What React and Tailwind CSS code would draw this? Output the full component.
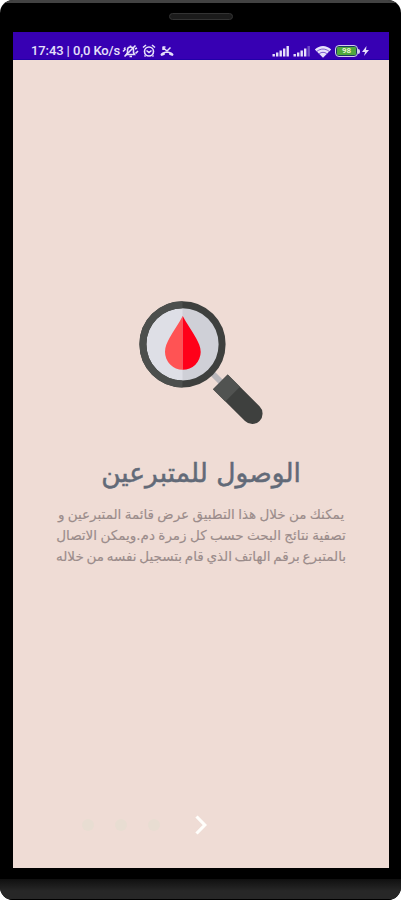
const LINES = [
  { text: 'يمكنك من خلال هذا التطبيق عرض قائمة المتبرعين و', spacing: '[word-spacing:-1px]' },
  { text: 'تصفية نتائج البحث حسب كل زمرة دم.ويمكن الاتصال', spacing: '[word-spacing:-0.9px]' },
  { text: 'بالمتبرع برقم الهاتف الذي قام بتسجيل نفسه من خلاله', spacing: '[word-spacing:-1.6px]' },
]

function MuteIcon() {
  return (
    <svg viewBox="0 0 17 14" className="w-[17px] h-[14px]" fill="none" stroke="currentColor" strokeWidth="1.6">
      <path d="M4.5 10.5h8l-1-2V6a3 3 0 0 0-6 0v2.500zM7.500 12.500h2.500M8.500 3V1.500" />
      <path d="M2.500 12.500 13.500 1.500M1 7.500l2.500-2.500M13.500 9.500l2.500-2.500M2 5l1.500-1.500M13 5l2-1" />
    </svg>
  )
}

function AlarmIcon() {
  return (
    <svg viewBox="0 0 14 14" className="w-[14px] h-[14px]" fill="none" stroke="currentColor" strokeWidth="1.6">
      <circle cx="7" cy="7.500" r="4.500" />
      <path d="M1 3.500 4 1M13 3.500 10 1M4.500 6.500l2.500 2 2.500-2M3.500 11.500l-1 1M10.500 11.500l1 1" />
    </svg>
  )
}

function MissedCallIcon() {
  return (
    <svg viewBox="0 0 14 12" className="w-[14px] h-[12px]" fill="currentColor">
      <path d="M.8 10.300C.3 9.700.5 8.900 1.100 8.400c3.200-2.600 8.600-2.600 11.800 0 .6.500.8 1.300.3 1.900l-.8.7-3.200-1.200V8.200c-1.500-.4-2.900-.4-4.400 0v1.600l-3.200 1.200z" />
      <path d="M3 2v3M2.500 2h3M3 2.500 7 6l3.500-3.500" fill="none" stroke="currentColor" strokeWidth="1.500" />
    </svg>
  )
}

function SignalIcon({ weak }) {
  return (
    <svg viewBox="0 0 18 12" className="w-[18px] h-[12px]" fill="currentColor">
      <rect x="0.500" y="9" width="2.400" height="2.500" />
      <rect x="4" y="7.500" width="2.400" height="4" />
      <rect x="7.500" y="5.500" width="2.400" height="6" />
      <rect x="11" y="3.500" width="2.400" height="8" />
      <rect x="14.500" y="1" width="2.400" height="10.500" opacity={weak ? 0.35 : 1} />
    </svg>
  )
}

function WifiIcon() {
  return (
    <svg viewBox="0 0 18 13" className="w-[18px] h-[13px]">
      <path d="M.8 4.500C5.500-.2 12.500-.2 17.200 4.500L9 12.700z" fill="currentColor" />
      <path d="M3 6.300c3.700-3 8.300-3 12 0M5.200 8.600c2.400-1.700 5.200-1.700 7.600 0" fill="none" stroke="#3700b3" strokeWidth=".6" />
    </svg>
  )
}

function StatusBar() {
  return (
    <div dir="ltr" className="flex h-[28px] shrink-0 items-end justify-between border-b border-[#2200a8] bg-[#3700b3] pl-[18px] pr-[20px] pb-px text-[#e6e0fa]">
      <div className="flex h-[14px] items-center">
        <span className="w-[91px] whitespace-nowrap font-[Roboto] text-[13px] font-medium leading-[14px] tracking-[-0.100px]">17:43 | 0,0 Ko/s</span>
        <MuteIcon />
        <span className="w-[3px]" />
        <AlarmIcon />
        <span className="w-[4px]" />
        <MissedCallIcon />
      </div>
      <div className="flex h-[14px] items-center">
        <SignalIcon />
        <span className="w-[3px]" />
        <SignalIcon weak />
        <span className="w-[3px]" />
        <WifiIcon />
        <span className="ml-[3px] flex h-[12px] w-[23px] items-center justify-center rounded-[4px] border-[1.500px] border-[#d5cdf0] bg-[#1c3b63] p-px">
          <span className="flex h-full w-full items-center justify-center rounded-[1px] bg-[#4fa83d] font-[Roboto] text-[8px] font-bold leading-none text-[#e5f5cc]">98</span>
        </span>
        <span className="h-[5px] w-[2px] rounded-r bg-[#d5cdf0]" />
        <svg viewBox="0 0 7 10" className="ml-[2px] h-[10px] w-[7px]" fill="currentColor">
          <path d="M4.500 0 0 6h3L2 10l5-6H4z" />
        </svg>
      </div>
    </div>
  )
}

function DonorSearch() {
  return (
    <svg viewBox="138 299 126 126" className="h-[126px] w-[126px]">
      <path d="m213 374 8 8" stroke="#b9b7bb" strokeWidth="6" />
      <circle cx="182.500" cy="344.300" r="39.500" fill="#dedfe6" />
      <path d="M182.500 306a38.300 38.300 0 0 1 0 76.600z" fill="#cfd0d7" />
      <circle cx="182.500" cy="344.300" r="39.600" fill="none" stroke="#3e403e" strokeWidth="7" />
      <path d="M182.500 304.700a39.600 39.600 0 0 0 0 79.200" fill="none" stroke="#4c4f4d" strokeWidth="7" />
      <path d="M182.700 316C179 323 173.500 331 169.500 338c-2.500 4.500-4.500 9-4.500 14a17.800 17.800 0 0 0 17.700 17.800z" fill="#ff5354" />
      <path d="M182.700 316C186.500 323 192 331 196 338c2.500 4.500 4.700 9 4.700 14a17.900 17.900 0 0 1-18 17.800z" fill="#ff0019" />
      <path d="M213 389.300 227.700 374.500 259.500 406.300A10.300 10.300 0 0 1 245 421z" fill="#3e403e" />
      <path d="M213 389.300 227.700 374.500 240 386.800 225.300 401.600z" fill="#515351" />
    </svg>
  )
}

export default function App() {
  return (
    <div className="flex h-[900px] w-[401px] flex-col overflow-hidden rounded-t-[13px] rounded-b-[13px] bg-black">
      <div className="flex h-[32px] shrink-0 items-start justify-center border-t-[3px] border-[#424242] pt-[10px]">
        <div className="h-[7px] w-[64px] rounded-full border border-[#333] bg-[#1b1b1b]" />
      </div>

      <div dir="rtl" className="mr-[12px] ml-[13px] flex h-[836px] shrink-0 flex-col bg-[#efdcd5]">
        <StatusBar />
        <main className="flex flex-col items-center pt-[239px]">
          <DonorSearch />
          <h1 className="mt-[28px] h-[40px] whitespace-nowrap font-['DejaVu_Sans',sans-serif] text-[26.500px] leading-[40px] text-[#626a78] [-webkit-text-stroke:0.500px_#626a78]">الوصول للمتبرعين</h1>
          <div className="mt-[11px] flex flex-col items-center font-['DejaVu_Sans',sans-serif] text-[13.500px] leading-[21px] text-[#9b8c8b] [-webkit-text-stroke:0.150px_#9b8c8b]">
            {LINES.map(({ text, spacing }) => (
              <p key={text} className={`whitespace-nowrap ${spacing}`}>{text}</p>
            ))}
          </div>
        </main>
        <div dir="ltr" className="mt-auto mb-[33px] flex h-[20px] items-center pl-[69px]">
          <div className="flex gap-[21px]">
            {[0, 1, 2].map((i) => (
              <span key={i} className="size-[12px] rounded-full bg-[#e8ddd2]" />
            ))}
          </div>
          <svg viewBox="0 0 12 20" className="ml-[35px] h-[20px] w-[12px]" fill="none" stroke="#fffefb" strokeWidth="3.200">
            <path d="m1.500 1.500 8.300 8.500-8.300 8.500" />
          </svg>
        </div>
      </div>

      <div className="mt-[11px] flex-1 border-b border-black bg-linear-to-b from-[#101010] to-[#272727] to-60%" />
    </div>
  )
}
